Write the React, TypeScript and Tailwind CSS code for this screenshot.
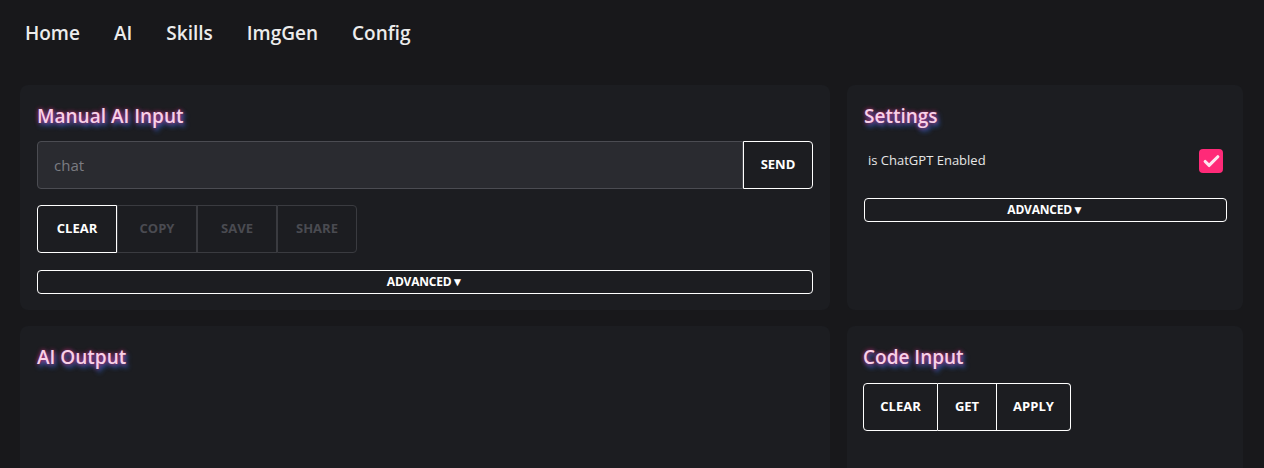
import { Check } from "lucide-react";

const font = "font-['Segoe_UI','Open_Sans',sans-serif]";
const glow =
  "text-[#f8d0e8] [text-shadow:0_0_4px_#d82a74,2px_3px_5px_#2f6fe0]";

function Title({ children }: { children: React.ReactNode }) {
  return (
    <h2 className={`text-[19px] font-semibold leading-6 ${glow}`}>{children}</h2>
  );
}

function Advanced() {
  return (
    <button className="w-full h-6 border border-white rounded-[4px] text-[12px] font-bold text-white tracking-[-0.2px]">
      ADVANCED▼
    </button>
  );
}

export default function App() {
  return (
    <main className={`bg-[#18181b] text-white min-h-screen ${font}`}>
      {/* NAV */}
      <nav className="flex gap-[34px] px-[25px] pt-[19px] h-[85px] text-[19px] font-semibold text-[#ececec]">
        <span>Home</span>
        <span>AI</span>
        <span>Skills</span>
        <span>ImgGen</span>
        <span>Config</span>
      </nav>

      <section className="grid grid-cols-[810px_396px] gap-x-[17px] gap-y-[16px] px-[20px]">
        {/* MANUAL INPUT */}
        <div className="bg-[#1c1d21] rounded-lg px-[17px] pt-[19px] pb-[17px] h-[225px]">
          <Title>Manual AI Input</Title>
          <div className="flex mt-[13px] h-[48px]">
            <div className="flex-1 bg-[#2a2b30] border border-[#4b4c52] rounded-l-[4px] flex items-center px-[16px] text-[15px] text-[#7b7c82]">
              chat
            </div>
            <button className="w-[70px] border border-white rounded-r-[4px] text-[13px] font-bold">
              SEND
            </button>
          </div>
          <div className="flex mt-[16px] h-[48px]">
            <button className="w-[80px] border border-white rounded-l-[4px] text-[13px] font-bold">
              CLEAR
            </button>
            <button className="w-[80px] border border-[#3a3b40] text-[13px] font-bold text-[#4a4b51]">
              COPY
            </button>
            <button className="w-[80px] border border-[#3a3b40] text-[13px] font-bold text-[#4a4b51]">
              SAVE
            </button>
            <button className="w-[80px] border border-[#3a3b40] rounded-r-[4px] text-[13px] font-bold text-[#4a4b51]">
              SHARE
            </button>
          </div>
          <div className="mt-[15px]">
            <Advanced />
          </div>
        </div>

        {/* SETTINGS */}
        <div className="bg-[#1c1d21] rounded-lg pl-[17px] pr-[16px] pt-[19px] h-[225px]">
          <Title>Settings</Title>
          <div className="flex items-center justify-between mt-[21px] pl-[4px] pr-[4px]">
            <span className="text-[13px] text-[#e6e6e6]">is ChatGPT Enabled</span>
            <span className="w-6 h-6 rounded-[4px] bg-[#ff2a78] flex items-center justify-center">
              <Check size={19} strokeWidth={4} className="text-[#fde6f0]" />
            </span>
          </div>
          <div className="mt-[23px]">
            <Advanced />
          </div>
        </div>

        {/* AI OUTPUT */}
        <div className="bg-[#1c1d21] rounded-t-lg px-[17px] pt-[19px] h-[142px]">
          <Title>AI Output</Title>
        </div>

        {/* CODE INPUT */}
        <div className="bg-[#1c1d21] rounded-t-lg px-[16px] pt-[19px] h-[142px]">
          <Title>Code Input</Title>
          <div className="flex mt-[14px] h-[48px]">
            <button className="w-[75px] border border-white rounded-l-[4px] text-[13px] font-bold">
              CLEAR
            </button>
            <button className="w-[59px] border border-white border-l-0 text-[13px] font-bold">
              GET
            </button>
            <button className="w-[74px] border border-white border-l-0 rounded-r-[4px] text-[13px] font-bold">
              APPLY
            </button>
          </div>
        </div>
      </section>
    </main>
  );
}
